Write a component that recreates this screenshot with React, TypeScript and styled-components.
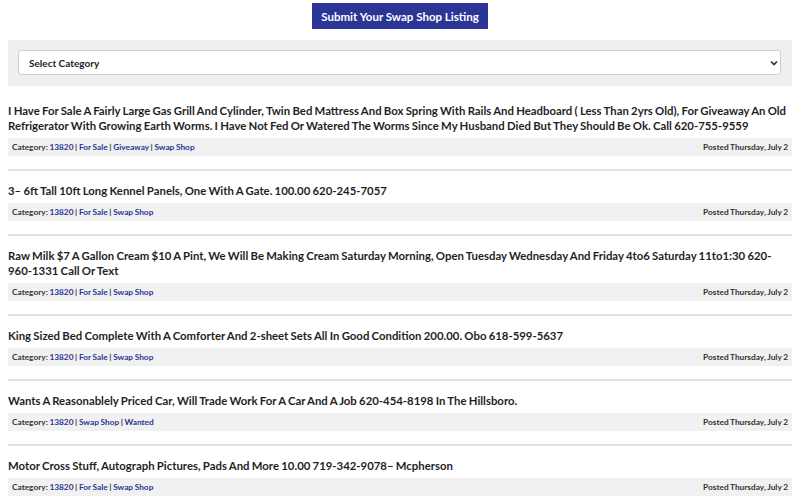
import React from "react";
import styled, { createGlobalStyle } from "styled-components";

const GlobalStyle = createGlobalStyle`
  body {
    margin: 0;
    background: #ffffff;
    font-family: Lato, "Open Sans", "Liberation Sans", sans-serif;
    color: #222222;
  }
`;

const Page = styled.div`
  display: flex;
  flex-direction: column;
  padding: 3px 8px 0;
`;

const ButtonRow = styled.div`
  display: flex;
  justify-content: center;
`;

const SubmitButton = styled.button`
  height: 26px;
  width: 176px;
  padding: 0;
  background-color: #2b3595;
  color: #ffffff;
  border: none;
  white-space: nowrap;
  font-family: Lato, sans-serif;
  font-weight: 700;
  font-size: 11.5px;
  cursor: pointer;
`;

const FilterPanel = styled.div`
  margin-top: 11px;
  background-color: #efefef;
  padding: 10px 11px 11px 10px;
`;

const SelectWrap = styled.div`
  position: relative;
`;

const Select = styled.select`
  appearance: none;
  width: 100%;
  height: 25px;
  background: #ffffff;
  border: 1px solid #cfcfcf;
  border-radius: 3px;
  padding: 0 10px;
  font-family: Lato, sans-serif;
  font-weight: 700;
  font-size: 10px;
  color: #222222;
`;

const Chevron = styled.svg`
  position: absolute;
  right: 3px;
  top: 10px;
  pointer-events: none;
`;

const PostList = styled.div`
  margin-top: 5px;
`;

const Post = styled.div`
  padding-top: 12px;
  padding-bottom: 13px;
  border-bottom: 2px solid #e2e2e2;
`;

const Title = styled.div`
  font-family: Lato, sans-serif;
  font-weight: 700;
  font-size: 11.36px;
  line-height: 15px;
  word-spacing: -0.5px;
  color: #1f1f1f;
`;

const MetaBar = styled.div`
  margin-top: 5px;
  height: 18px;
  background-color: #f1f1f1;
  display: flex;
  align-items: center;
  justify-content: space-between;
  padding: 0 4px;
  font-family: Lato, sans-serif;
  font-size: 8.3px;
  font-weight: 700;
  word-spacing: -0.4px;
  color: #333333;
`;

const MetaLink = styled.a`
  color: #2b3595;
  text-decoration: none;
`;

interface PostData {
  title: string;
  cats: string[];
}

const posts: PostData[] = [
  {
    title:
      "I Have For Sale A Fairly Large Gas Grill And Cylinder, Twin Bed Mattress And Box Spring With Rails And Headboard ( Less Than 2yrs Old), For Giveaway An Old Refrigerator With Growing Earth Worms. I Have Not Fed Or Watered The Worms Since My Husband Died But They Should Be Ok. Call 620-755-9559",
    cats: ["For Sale", "Giveaway", "Swap Shop"],
  },
  {
    title: "3\u2013 6ft Tall 10ft Long Kennel Panels, One With A Gate. 100.00 620-245-7057",
    cats: ["For Sale", "Swap Shop"],
  },
  {
    title:
      "Raw Milk $7 A Gallon Cream $10 A Pint, We Will Be Making Cream Saturday Morning, Open Tuesday Wednesday And Friday 4to6 Saturday 11to1:30 620-960-1331 Call Or Text",
    cats: ["For Sale", "Swap Shop"],
  },
  {
    title:
      "King Sized Bed Complete With A Comforter And 2-sheet Sets All In Good Condition 200.00. Obo 618-599-5637",
    cats: ["For Sale", "Swap Shop"],
  },
  {
    title:
      "Wants A Reasonablely Priced Car, Will Trade Work For A Car And A Job 620-454-8198 In The Hillsboro.",
    cats: ["Swap Shop", "Wanted"],
  },
  {
    title: "Motor Cross Stuff, Autograph Pictures, Pads And More 10.00 719-342-9078\u2013 Mcpherson",
    cats: ["For Sale", "Swap Shop"],
  },
];

const App = () => {
  return (
    <Page>
      <GlobalStyle />
      <ButtonRow>
        <SubmitButton>Submit Your Swap Shop Listing</SubmitButton>
      </ButtonRow>
      <FilterPanel>
        <SelectWrap>
          <Select defaultValue="">
            <option value="">Select Category</option>
          </Select>
          <Chevron width="8" height="6" viewBox="0 0 8 6">
            <path d="M1 1.5 L4 4.5 L7 1.5" stroke="#333" strokeWidth="1.7" fill="none" />
          </Chevron>
        </SelectWrap>
      </FilterPanel>
      <PostList>
        {posts.map((p, i) => (
          <Post key={i}>
            <Title>{p.title}</Title>
            <MetaBar>
              <span>
                Category: <MetaLink href="#">13820</MetaLink>
                {p.cats.map((c) => (
                  <React.Fragment key={c}>
                    {" | "}
                    <MetaLink href="#">{c}</MetaLink>
                  </React.Fragment>
                ))}
              </span>
              <span>Posted Thursday, July 2</span>
            </MetaBar>
          </Post>
        ))}
      </PostList>
    </Page>
  );
};

export default App;
